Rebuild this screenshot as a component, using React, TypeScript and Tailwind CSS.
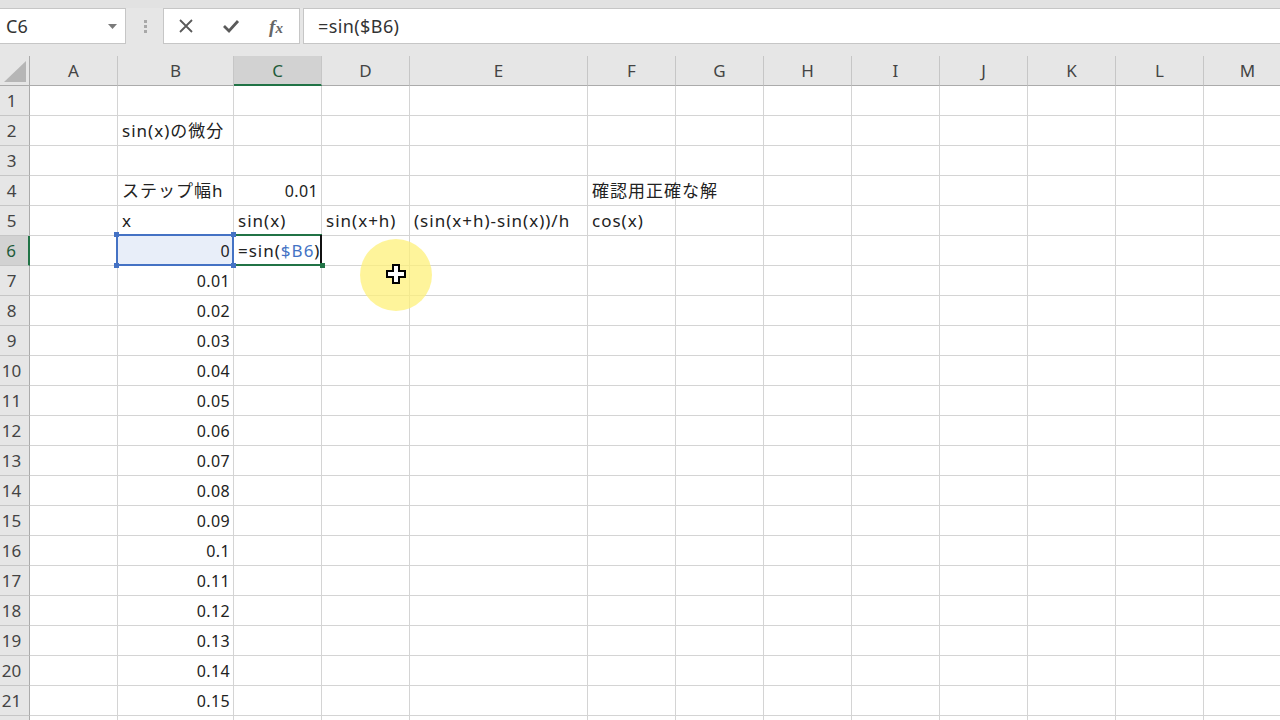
import React from "react";

const COLS = ["A", "B", "C", "D", "E", "F", "G", "H", "I", "J", "K", "L", "M"];

type CellVal = { t: React.ReactNode; align?: "l" | "r" };

const data: Record<string, CellVal> = {
  B2: { t: "sin(x)の微分" },
  B4: { t: "ステップ幅h" },
  C4: { t: "0.01", align: "r" },
  F4: { t: "確認用正確な解" },
  B5: { t: "x" },
  C5: { t: "sin(x)" },
  D5: { t: "sin(x+h)" },
  E5: { t: "(sin(x+h)-sin(x))/h" },
  F5: { t: "cos(x)" },
  B6: { t: "0", align: "r" },
  C6: {
    t: (
      <>
        =sin(<span className="text-[#4472c4]">$B6</span>)
      </>
    ),
  },
};
const vals = ["0.01", "0.02", "0.03", "0.04", "0.05", "0.06", "0.07", "0.08", "0.09", "0.1", "0.11", "0.12", "0.13", "0.14", "0.15"];
vals.forEach((v, i) => {
  data["B" + (i + 7)] = { t: v, align: "r" };
});

const rows = Array.from({ length: 22 }, (_, i) => i + 1);

export default function App() {
  return (
    <div className="w-[1280px] h-[720px] overflow-hidden bg-white relative font-['Noto_Sans','Noto_Sans_CJK_JP',sans-serif] text-[#222]">
      {/* Formula bar area */}
      <div className="h-[56px] bg-[#e6e6e6] flex flex-col">
        <div className="h-[8px] bg-[#e2e2e2]" />
        <div className="flex items-start h-[36px]">
          <div className="w-[126px] h-[36px] bg-white border border-l-0 border-[#c6c6c6] flex items-center justify-between pl-[6px] pr-[8px]">
            <span className="text-[18px] text-[#333] leading-none">C6</span>
            <svg width="9" height="5" viewBox="0 0 9 5">
              <path d="M0 0 L9 0 L4.5 5 Z" fill="#7a7a7a" />
            </svg>
          </div>
          <div className="w-[37px] h-[36px] flex items-center justify-center">
            <div className="flex flex-col gap-[2px] ml-[2px]">
              <div className="w-[3px] h-[3px] bg-[#a8a8a8]" />
              <div className="w-[3px] h-[3px] bg-[#a8a8a8]" />
              <div className="w-[3px] h-[3px] bg-[#a8a8a8]" />
            </div>
          </div>
          <div className="w-[137px] h-[36px] bg-white border border-[#c6c6c6] flex items-center">
            <div className="w-[44px] flex justify-center">
              <svg width="16" height="16" viewBox="0 0 16 16">
                <path d="M2 2 L14 14 M14 2 L2 14" stroke="#5a5a5a" strokeWidth="1.8" />
              </svg>
            </div>
            <div className="w-[46px] flex justify-center">
              <svg width="18" height="16" viewBox="0 0 18 16">
                <path d="M2 8 L7 13 L16 3" stroke="#5a5a5a" strokeWidth="2.8" fill="none" />
              </svg>
            </div>
            <div className="w-[44px] flex justify-center">
              <span className="font-['Liberation_Serif',serif] italic font-bold text-[19px] text-[#666] leading-none">
                f<span className="text-[15px]">x</span>
              </span>
            </div>
          </div>
          <div className="ml-[3px] flex-1 h-[36px] bg-white border border-r-0 border-[#c6c6c6] flex items-center pl-[14px]">
            <span className="text-[18px] tracking-[0.4px] text-[#333]">=sin($B6)</span>
          </div>
        </div>
      </div>

      {/* Grid */}
      <div className="relative">
        <div className="grid grid-cols-[30px_88px_116px_88px_88px_178px_88px_88px_88px_88px_88px_88px_88px_88px]">
          {/* header row */}
          <div className="h-[30px] bg-[#e6e6e6] border-r border-b border-[#ababab] relative overflow-hidden">
            <svg className="absolute left-[4px] top-[5px]" width="22" height="21" viewBox="0 0 22 21">
              <path d="M22 0 L22 21 L0 21 Z" fill="#b6b6b6" />
            </svg>
          </div>
          {COLS.map((c) => (
            <div
              key={c}
              className={
                c === "C"
                  ? "h-[30px] bg-[#d2d2d2] border-r border-[#c6c6c6] border-b-2 border-b-[#217346] flex items-center justify-center text-[17px] text-[#1f5c3a] pt-[2px]"
                  : "h-[30px] bg-[#e6e6e6] border-r border-[#c6c6c6] border-b border-b-[#ababab] flex items-center justify-center text-[17px] text-[#444]"
              }
            >
              {c}
            </div>
          ))}
          {rows.map((r) => (
            <React.Fragment key={r}>
              <div
                className={
                  r === 6
                    ? "h-[30px] bg-[#d2d2d2] border-r-2 border-r-[#217346] border-b border-[#c6c6c6] flex items-center justify-center pr-[6px] text-[17px] text-[#1f5c3a]"
                    : "h-[30px] bg-[#e6e6e6] border-r border-r-[#ababab] border-b border-[#c6c6c6] flex items-center justify-center pr-[6px] text-[17px] text-[#444]"
                }
              >
                {r <= 21 ? r : null}
              </div>
              {COLS.map((c) => {
                const v = data[c + r];
                const isB6 = c === "B" && r === 6;
                const isNum = v && v.align === "r";
                return (
                  <div
                    key={c}
                    className={
                      "h-[30px] border-r border-b border-[#d4d4d4] flex items-center whitespace-nowrap relative " +
                      (isB6 ? "bg-[#e8eef9] " : "") +
                      (isNum ? "justify-end pr-[3px] text-[16px] tracking-[0.4px]" : "pl-[4px] text-[17px] tracking-[1px]")
                    }
                  >
                    {v ? <span className="relative z-10">{v.t}</span> : null}
                  </div>
                );
              })}
            </React.Fragment>
          ))}
        </div>

        {/* Selection overlays */}
        <div className="absolute left-[116px] top-[178px] w-[118px] h-[32px] border-2 border-[#4472c4] z-20" />
        <div className="absolute left-[114px] top-[176px] w-[5px] h-[5px] bg-[#4472c4] z-30" />
        <div className="absolute left-[114px] top-[207px] w-[5px] h-[5px] bg-[#4472c4] z-30" />
        <div className="absolute left-[231px] top-[176px] w-[5px] h-[5px] bg-[#4472c4] z-30" />
        <div className="absolute left-[231px] top-[207px] w-[5px] h-[5px] bg-[#4472c4] z-30" />
        <div className="absolute left-[234px] top-[178px] w-[88px] h-[32px] border-2 border-l-0 border-[#217346] z-20" />
        <div className="absolute left-[320px] top-[179px] w-[2px] h-[30px] bg-[#111] z-30" />
        <div className="absolute left-[320px] top-[207px] w-[5px] h-[5px] bg-[#217346] z-30" />

        {/* Yellow highlight + cursor */}
        <div className="absolute left-[360px] top-[183px] w-[72px] h-[72px] rounded-full bg-[#fdf07a] opacity-75 z-30" />
        <svg className="absolute left-[386px] top-[208px] z-40" width="20" height="20" viewBox="0 0 20 20">
          <path
            d="M7 1 H13 V7 H19 V13 H13 V19 H7 V13 H1 V7 H7 Z"
            fill="#fff"
            stroke="#000"
            strokeWidth="2"
            strokeLinejoin="miter"
          />
        </svg>
      </div>
    </div>
  );
}
